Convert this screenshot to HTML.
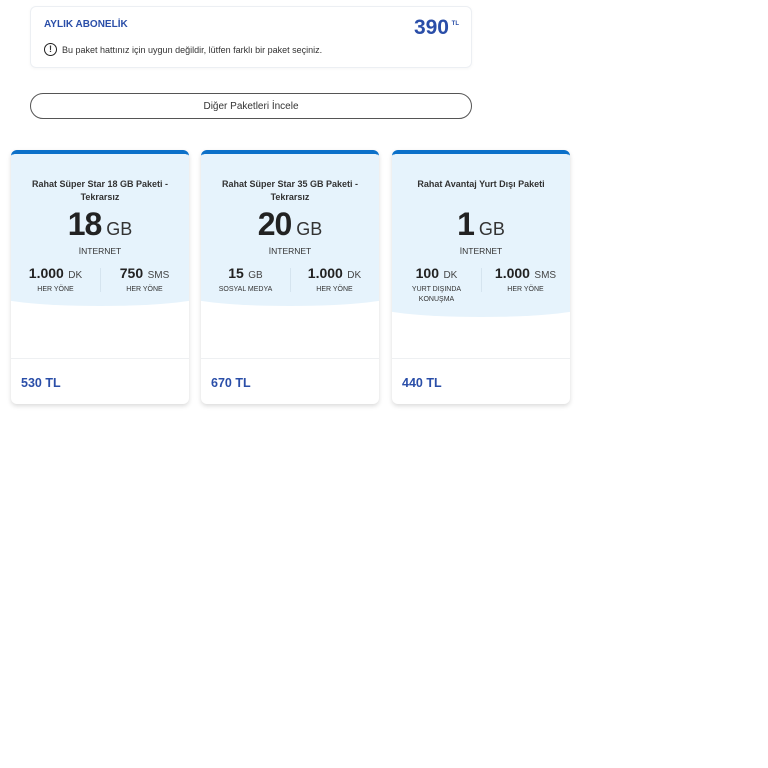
<!DOCTYPE html>
<html><head><meta charset="utf-8"><style>
*{box-sizing:border-box;margin:0;padding:0}
body{width:768px;height:768px;background:#fff;font-family:"Liberation Sans",sans-serif;position:relative;overflow:hidden;color:#222}
.top{position:absolute;left:30px;top:6px;width:442px;height:62px;border:1px solid #eceff3;border-radius:6px;box-shadow:0 1px 3px rgba(0,0,0,.04)}
.top .t{position:absolute;left:13px;top:12px;font-size:10px;font-weight:bold;color:#2a4ea8}
.top .p{position:absolute;right:22px;top:9px;font-size:21px;font-weight:bold;color:#2a4ea8}
.top .p sup{font-size:6px;position:absolute;right:-10px;top:5px}
.top .w{position:absolute;left:13px;top:36px;font-size:9px;color:#333;display:flex;align-items:center}
.ic{width:13px;height:13px;border:1.5px solid #222;border-radius:50%;margin-right:5px;font-size:9px;font-weight:bold;text-align:center;line-height:10px}
.btn{position:absolute;left:30px;top:93px;width:442px;height:26px;border:1px solid #555;border-radius:13px;text-align:center;line-height:26px;font-size:10px;color:#333}
.card{position:absolute;top:150px;width:178px;height:254px;border-radius:6px;box-shadow:0 2px 5px rgba(0,0,0,.15);overflow:hidden;background:#fff;border-top:4px solid #0b70c9}
.bg{position:absolute;left:-20px;top:0;width:218px;background:#e6f3fc;border-radius:0 0 50% 50%/0 0 12px 12px}
.nm{position:absolute;left:0;right:0;top:24px;text-align:center;font-size:9px;font-weight:bold;line-height:13px;color:#333}
.big{position:absolute;left:0;right:0;text-align:center;font-size:32px;font-weight:bold;color:#222;letter-spacing:-1px}
.big span{font-size:18px;font-weight:normal;color:#333;letter-spacing:0;margin-left:-3px}
.int{position:absolute;left:0;right:0;text-align:center;font-size:8.5px;color:#333}
.col{position:absolute;width:89px;text-align:center}
.col b{font-size:14px}.col i{font-style:normal;font-size:10px;color:#444}
.col div{font-size:7px;color:#333;line-height:10px;margin-top:2px}
.sep{position:absolute;left:89px;width:1px;height:24px;background:#d5e4ef}
.line{position:absolute;left:0;right:0;top:204px;height:1px;background:#eef0f2}
.pr{position:absolute;left:10px;top:222px;font-size:12.5px;font-weight:bold;color:#2a4ea8}
</style></head><body>
<div class="top"><div class="t">AYLIK ABONELİK</div><div class="p">390<sup>TL</sup></div>
<div class="w"><div class="ic">!</div>Bu paket hattınız için uygun değildir, lütfen farklı bir paket seçiniz.</div></div>
<div class="btn">Diğer Paketleri İncele</div>

<div class="card" style="left:11px"><div class="bg" style="height:152px"></div>
<div class="nm">Rahat Süper Star 18 GB Paketi -<br>Tekrarsız</div>
<div class="big" style="top:52px">18 <span>GB</span></div>
<div class="int" style="top:92px">İNTERNET</div>
<div class="col" style="left:0;top:111px"><b>1.000</b> <i>DK</i><div>HER YÖNE</div></div>
<div class="sep" style="top:114px"></div>
<div class="col" style="left:89px;top:111px"><b>750</b> <i>SMS</i><div>HER YÖNE</div></div>
<div class="line"></div><div class="pr">530 TL</div></div>

<div class="card" style="left:201px"><div class="bg" style="height:152px"></div>
<div class="nm">Rahat Süper Star 35 GB Paketi -<br>Tekrarsız</div>
<div class="big" style="top:52px">20 <span>GB</span></div>
<div class="int" style="top:92px">İNTERNET</div>
<div class="col" style="left:0;top:111px"><b>15</b> <i>GB</i><div>SOSYAL MEDYA</div></div>
<div class="sep" style="top:114px"></div>
<div class="col" style="left:89px;top:111px"><b>1.000</b> <i>DK</i><div>HER YÖNE</div></div>
<div class="line"></div><div class="pr">670 TL</div></div>

<div class="card" style="left:392px"><div class="bg" style="height:163px"></div>
<div class="nm">Rahat Avantaj Yurt Dışı Paketi</div>
<div class="big" style="top:52px">1 <span>GB</span></div>
<div class="int" style="top:92px">İNTERNET</div>
<div class="col" style="left:0;top:111px"><b>100</b> <i>DK</i><div>YURT DIŞINDA<br>KONUŞMA</div></div>
<div class="sep" style="top:114px"></div>
<div class="col" style="left:89px;top:111px"><b>1.000</b> <i>SMS</i><div>HER YÖNE</div></div>
<div class="line"></div><div class="pr">440 TL</div></div>
</body></html>
